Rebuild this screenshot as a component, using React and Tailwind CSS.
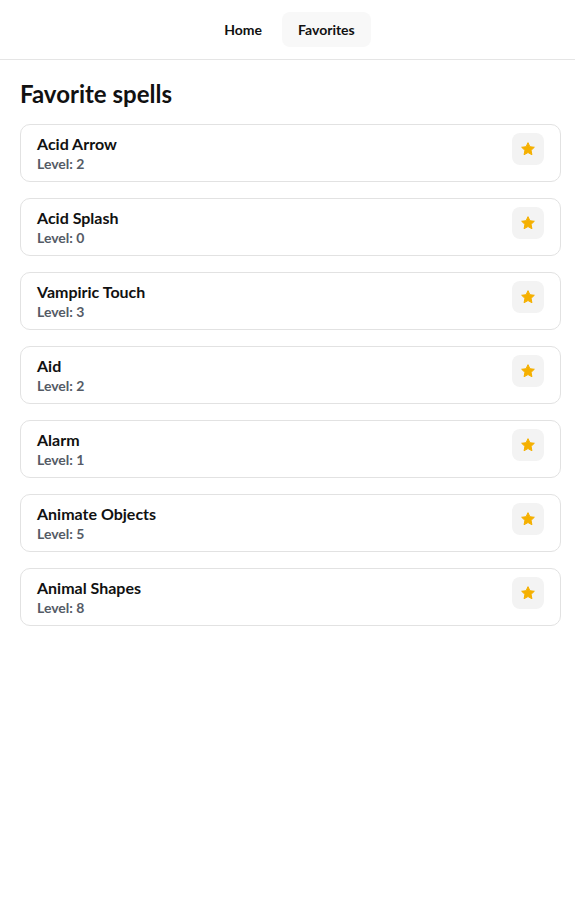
import React from "react";

const spells = [
  { name: "Acid Arrow", level: 2 },
  { name: "Acid Splash", level: 0 },
  { name: "Vampiric Touch", level: 3 },
  { name: "Aid", level: 2 },
  { name: "Alarm", level: 1 },
  { name: "Animate Objects", level: 5 },
  { name: "Animal Shapes", level: 8 },
];

const Star = () => (
  <svg width="16" height="16" viewBox="0 0 24 24" fill="#f5b000">
    <path d="M12 2.5l2.9 6.1 6.6.8-4.9 4.6 1.3 6.6L12 17.3l-5.9 3.3 1.3-6.6-4.9-4.6 6.6-.8z" stroke="#f5b000" strokeWidth="1.5" strokeLinejoin="round" />
  </svg>
);

const App = () => {
  return (
    <div className="min-h-screen bg-white text-[#111] font-['Lato',sans-serif]">
      <nav className="h-[60px] border-b border-[#e5e5e5] flex items-center justify-center gap-1 pl-1">
        <button className="h-[35px] px-4 rounded-lg text-sm font-bold">Home</button>
        <button className="h-[35px] px-4 rounded-lg text-sm font-bold bg-[#f8f8f8]">
          Favorites
        </button>
      </nav>
      <main className="pl-5 pr-[14px] pt-[18px]">
        <h1 className="text-2xl leading-8 font-bold mb-[14px]">Favorite spells</h1>
        <div className="flex flex-col gap-4">
          {spells.map((s) => (
            <div
              key={s.name}
              className="border border-[#e2e2e2] rounded-[10px] px-4 py-2 flex items-start justify-between"
            >
              <div className="flex flex-col">
                <span className="text-base leading-[22px] font-bold">{s.name}</span>
                <span className="text-sm leading-[18px] font-bold text-[#555b66]">
                  Level: {s.level}
                </span>
              </div>
              <button className="w-8 h-8 rounded-lg bg-[#f3f3f3] flex items-center justify-center">
                <Star />
              </button>
            </div>
          ))}
        </div>
      </main>
    </div>
  );
};

export default App;
